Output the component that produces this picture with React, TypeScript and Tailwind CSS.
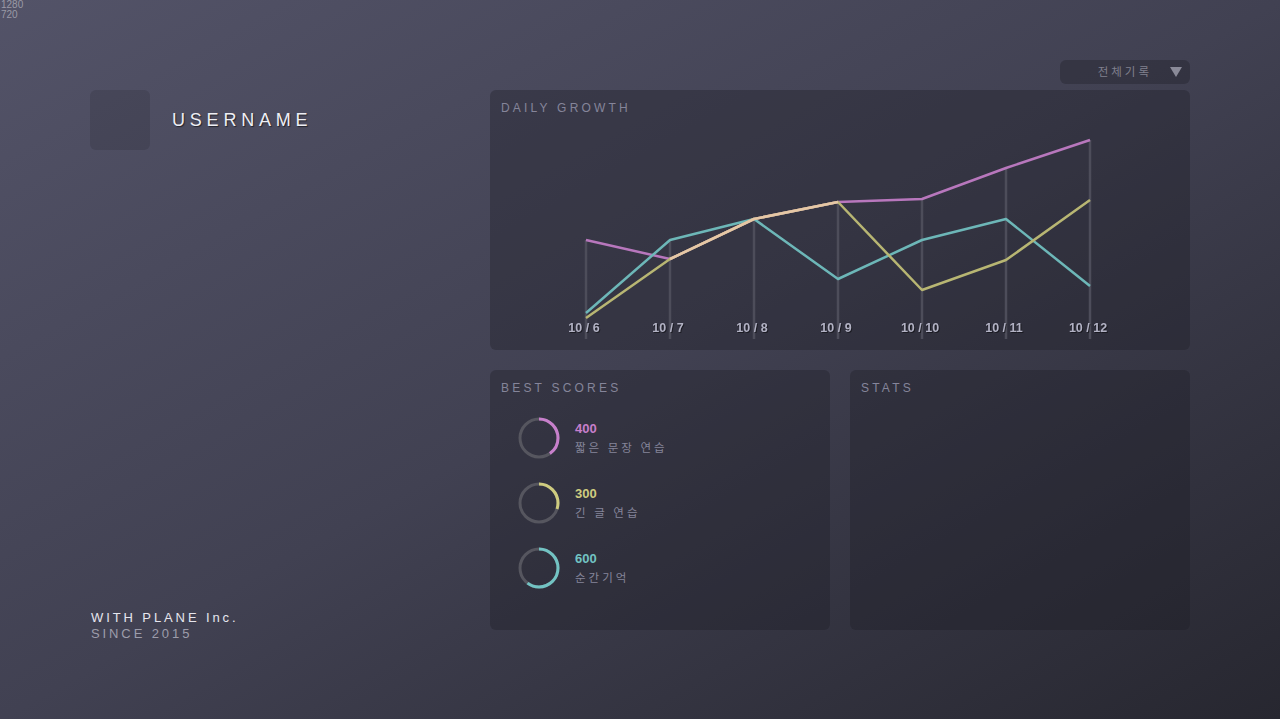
const days = ['10 / 6', '10 / 7', '10 / 8', '10 / 9', '10 / 10', '10 / 11', '10 / 12']
const xs = [96, 180, 264, 348, 432, 516, 600]

// y values relative to the chart card
const series = [
  { color: '#b877bd', ys: [150, 169, 129, 112, 109, 78, 50] },
  { color: '#6db7b8', ys: [223, 150, 129, 189, 150, 129, 196] },
  { color: '#b8b673', ys: [228, 169, 129, 112, 200, 170, 110] },
]

const scores = [
  { value: 400, label: '짧은 문장 연습', color: '#c77fcb' },
  { value: 300, label: '긴 글 연습', color: '#cfcc7f' },
  { value: 600, label: '순간기억', color: '#72c3c3' },
]

const korean = '"Noto Sans CJK KR", "Liberation Sans", sans-serif'

function pts(ys: number[]) {
  return ys.map((y, i) => `${xs[i]},${y}`).join(' ')
}

function DailyGrowth() {
  return (
    <div className="relative h-[260px] rounded-md bg-[#1c1c26]/35">
      <div className="absolute left-[11px] top-[9px] text-[12px] tracking-[3.2px] text-[#85859a]">
        DAILY GROWTH
      </div>
      <svg className="absolute inset-0" width={700} height={260}>
        {xs.map((x, i) => {
          const top = Math.min(...series.map((s) => s.ys[i]))
          return <line key={x} x1={x} y1={top} x2={x} y2={249} stroke="#4d4d5a" strokeWidth={2.5} />
        })}
        {series.map((s) => (
          <polyline key={s.color} points={pts(s.ys)} fill="none" stroke={s.color} strokeWidth={2.5} strokeLinejoin="round" />
        ))}
        {/* purple + yellow overlap reads as a peach blend */}
        <polyline points="180,169 264,129 348,112" fill="none" stroke="#e6c7a6" strokeWidth={2.5} strokeLinejoin="round" />
        {days.map((d, i) => (
          <text
            key={d}
            x={xs[i] - 2}
            y={242}
            textAnchor="middle"
            fontFamily="Liberation Sans, sans-serif"
            fontWeight={700}
            fontSize={12.5}
            fill="#b2b2c4"
            style={{ filter: 'drop-shadow(1px 1px 0 rgba(0,0,0,0.45))' }}
          >
            {d}
          </text>
        ))}
      </svg>
    </div>
  )
}

function Ring({ value, color }: { value: number; color: string }) {
  const r = 19
  const c = 2 * Math.PI * r
  const pct = value / 1000
  return (
    <svg width={44} height={44} className="-rotate-90">
      <circle cx={22} cy={22} r={r} fill="none" stroke="#56565f" strokeWidth={3} />
      <circle
        cx={22}
        cy={22}
        r={r}
        fill="none"
        stroke={color}
        strokeWidth={3}
        strokeDasharray={`${c * pct} ${c}`}
      />
    </svg>
  )
}

function BestScores() {
  return (
    <div className="h-[260px] w-[340px] rounded-md bg-[#1c1c26]/35 px-[11px] pt-[9px]">
      <div className="text-[12px] tracking-[3.2px] text-[#85859a]">BEST SCORES</div>
      <div className="mt-[19px] flex flex-col gap-[21px] pl-[16px]">
        {scores.map((s) => (
          <div key={s.value} className="flex items-center gap-[14px]">
            <Ring value={s.value} color={s.color} />
            <div className="flex flex-col">
              <span className="text-[13px] font-bold leading-[18px]" style={{ color: s.color }}>
                {s.value}
              </span>
              <span className="text-[11.5px] leading-[18px] tracking-[3px] text-[#85859a]" style={{ fontFamily: korean }}>
                {s.label}
              </span>
            </div>
          </div>
        ))}
      </div>
    </div>
  )
}

export default function App() {
  return (
    <div
      className="relative h-[719px] w-[1280px] overflow-hidden bg-gradient-to-br from-[#535368] via-[#414152] to-[#272730] font-['Liberation_Sans',sans-serif]"
    >
      <div className="absolute left-[1px] top-0 text-[10px] leading-[10px] text-[#9a9aa6]">
        1280
        <br />
        720
      </div>

      <div className="flex px-[90px] pt-[60px]">
        {/* left column */}
        <div className="flex h-[582px] w-[400px] flex-col">
          <div className="mt-[30px] flex items-center gap-[22px]">
            <div className="h-[60px] w-[60px] rounded-md bg-[#2a2a38]/25" />
            <div className="text-[18px] tracking-[4.8px] text-[#eeeef4] [text-shadow:1px_1px_1px_rgba(0,0,0,0.55)]">
              USERNAME
            </div>
          </div>
          <div className="mt-auto pl-[1px]">
            <div className="text-[13px] leading-[16px] tracking-[2.9px] text-[#e6e6ee]">WITH PLANE Inc.</div>
            <div className="text-[13px] leading-[16px] tracking-[2.9px] text-[#9d9dab]">SINCE 2015</div>
          </div>
        </div>

        {/* right column */}
        <div className="flex w-[700px] flex-col">
          <div className="flex justify-end">
            <div className="flex h-[24px] w-[130px] items-center justify-end gap-[18px] rounded-md bg-[#1c1c26]/35 pr-[8px]">
              <span className="text-[11.5px] tracking-[3px] text-[#80808e]" style={{ fontFamily: korean }}>
                전체기록
              </span>
              <svg width={12} height={10} viewBox="0 0 12 10">
                <polygon points="0,0 12,0 6,10" fill="#8a8a98" />
              </svg>
            </div>
          </div>
          <div className="mt-[6px]">
            <DailyGrowth />
          </div>
          <div className="mt-[20px] flex gap-[20px]">
            <BestScores />
            <div className="h-[260px] w-[340px] rounded-md bg-[#1c1c26]/35 px-[11px] pt-[9px]">
              <div className="text-[12px] tracking-[3.2px] text-[#85859a]">STATS</div>
            </div>
          </div>
        </div>
      </div>
    </div>
  )
}
